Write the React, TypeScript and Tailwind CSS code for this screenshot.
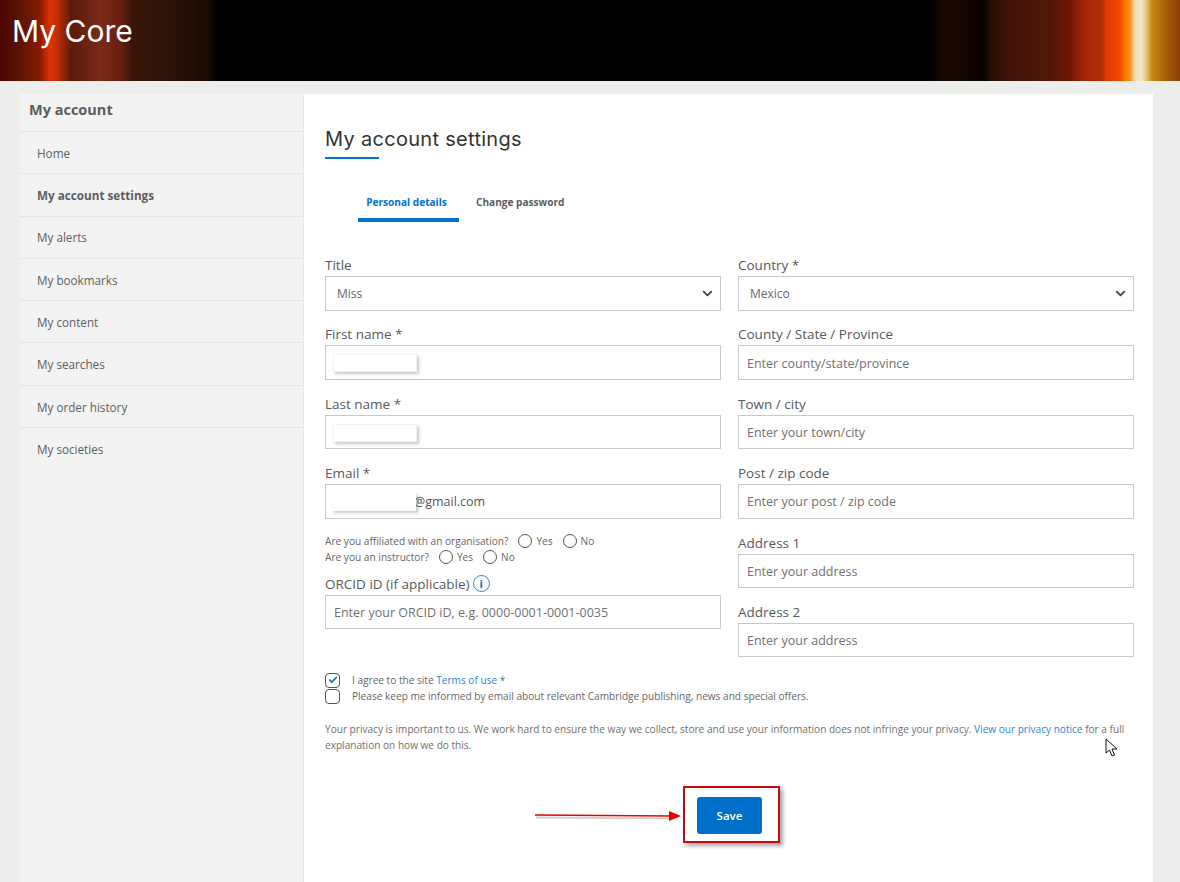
import { ChevronDown, Check } from 'lucide-react'

const navItems = ['Home', 'My account settings', 'My alerts', 'My bookmarks', 'My content', 'My searches', 'My order history', 'My societies']

function Label({ text }: { text: string }) {
  return <label className="block h-[22px] text-[13.5px] leading-[22px] text-[#55595c]">{text}</label>
}

function SelectField({ label, value }: { label: string; value: string }) {
  return (
    <div>
      <Label text={label} />
      <div className="flex h-[34.5px] items-center justify-between border border-[#c8c8c8] bg-white pl-[11px] pr-[5px] text-[12px] text-[#666]">
        <span className="pt-[2px]">{value}</span>
        <ChevronDown size={15} strokeWidth={3} className="text-[#444]" />
      </div>
    </div>
  )
}

function TextField({ label, placeholder, redact }: { label: string; placeholder?: string; redact?: boolean }) {
  return (
    <div>
      <Label text={label} />
      <div className="relative">
        <input
          placeholder={placeholder}
          readOnly
          className="block h-[34.5px] w-full border border-[#c8c8c8] bg-white px-2 pt-[1px] text-[12.5px] text-[#555] outline-none placeholder:text-[#707070]"
        />
        {redact && <Redaction />}
      </div>
    </div>
  )
}

function Redaction() {
  return <div className="absolute left-2 top-[9px] h-[18px] w-[84px] border border-[#f2f2f2] bg-white shadow-[2px_2px_3px_rgba(0,0,0,0.22)]" />
}

function Radio({ text }: { text: string }) {
  return (
    <span className="ml-[10px] inline-flex items-center">
      <span className="h-[14px] w-[14px] rounded-full border border-[#555] bg-white" />
      <span className="ml-[4px]">{text}</span>
    </span>
  )
}

export default function App() {
  return (
    <div className="relative h-[882px] overflow-hidden bg-[#ededeb] font-['Open_Sans',sans-serif]">
      {/* Banner */}
      <header className="flex h-[81px] items-center bg-[linear-gradient(90deg,#4a0500_0px,#5a1505_20px,#8a1a03_40px,#e03000_50px,#c83005_56px,#5a1a0a_72px,#7a2a18_100px,#6a2010_120px,#3a1508_132px,#2a1208_170px,#1a0a03_208px,#000_216px,#000_930px,#1a0800_945px,#0a0300_985px,#2a1005_992px,#401508_1010px,#501808_1050px,#701505_1070px,#a82508_1085px,#b03008_1102px,#e03a05_1106px,#f04a02_1120px,#ff7a05_1126px,#f09020_1130px,#f0dcb0_1135px,#f5e8d0_1141px,#e8c880_1146px,#c88a10_1152px,#a86008_1165px,#8a4008_1180px)] pb-[18px] pl-[12px]">
        <h1 className="font-['Inter',sans-serif] text-[30px] font-normal text-white">My Core</h1>
      </header>

      <div className="ml-[20px] mt-[13px] flex w-[1133px]">
        {/* Sidebar */}
        <aside className="h-[800px] w-[284px] border-r border-[#e6e6e6] bg-[#f3f3f3]">
          <div className="flex h-[38px] items-center border-b border-[#e6e6e6] pb-[6px] pl-[9px] text-[14.5px] font-bold text-[#5a5d60]">My account</div>
          <ul>
            {navItems.map((item) => (
              <li
                key={item}
                className={`flex h-[42.3px] items-center border-b border-[#e6e6e6] pl-[17px] pt-[2px] text-[11.7px] text-[#5c5f62] last:border-b-0 ${
                  item === 'My account settings' ? 'font-bold' : ''
                }`}
              >
                {item}
              </li>
            ))}
          </ul>
        </aside>

        {/* Main card */}
        <main className="h-[800px] flex-1 bg-white pl-[21px] pr-[19px] pt-[32px]">
          <h2 className="font-['Inter',sans-serif] text-[20px] leading-[27px] font-normal tracking-[0.3px] text-[#333]">My account settings</h2>
          <div className="mt-[4px] h-[2px] w-[54px] bg-[#0072cf]" />

          <div className="ml-[33px] mt-[33px] flex text-[10.1px] font-bold">
            <div className="relative h-[30px] w-[101px] border-b-[4px] border-[#0072cf] pr-[4px] pt-[2px] text-center leading-[16px] text-[#0072cf]">
              Personal details
              <span className="absolute left-1/2 top-[26px] h-0 w-0 -translate-x-1/2 border-x-[4px] border-t-[4px] border-x-transparent border-t-[#0072cf]" />
            </div>
            <div className="ml-[17px] pt-[2px] leading-[16px] text-[#5a5d60]">Change password</div>
          </div>

          <div className="mt-[32px] grid grid-cols-[396px_396px] gap-x-[17px]">
            {/* Left column */}
            <div className="flex flex-col gap-[12.9px]">
              <SelectField label="Title" value="Miss" />
              <TextField label="First name *" redact />
              <TextField label="Last name *" redact />
              <div>
                <Label text="Email *" />
                <div className="relative flex h-[34.5px] items-center border border-[#c8c8c8] pl-[88px] pt-[1px] text-[12.5px] text-[#555]">
                  @gmail.com
                  <div className="absolute left-[6px] top-[8px] h-[18px] w-[84px] bg-white shadow-[2px_2px_3px_rgba(0,0,0,0.22)]" />
                </div>
              </div>
              <div className="mt-[1px] text-[10.15px] leading-[16px] text-[#666]">
                <div className="flex items-center">
                  Are you affiliated with an organisation?<Radio text="Yes" /><Radio text="No" />
                </div>
                <div className="flex items-center">
                  Are you an instructor?<Radio text="Yes" /><Radio text="No" />
                </div>
                <div className="mt-[8px] flex h-[22px] items-center text-[13.5px] text-[#55595c]">
                  ORCID iD (if applicable)
                  <span className="ml-[3px] flex h-[17px] w-[17px] items-center justify-center rounded-full border border-[#2a8ad8] text-[#0072cf]">
                    <span className="text-[11px] font-bold leading-none">i</span>
                  </span>
                </div>
                <input
                  placeholder="Enter your ORCID iD, e.g. 0000-0001-0001-0035"
                  readOnly
                  className="block h-[34.5px] w-full border border-[#c8c8c8] px-2 pt-[1px] text-[12.5px] outline-none placeholder:text-[#707070]"
                />
              </div>
            </div>

            {/* Right column */}
            <div className="flex flex-col gap-[12.9px]">
              <SelectField label="Country *" value="Mexico" />
              <TextField label="County / State / Province" placeholder="Enter county/state/province" />
              <TextField label="Town / city" placeholder="Enter your town/city" />
              <TextField label="Post / zip code" placeholder="Enter your post / zip code" />
              <TextField label="Address 1" placeholder="Enter your address" />
              <TextField label="Address 2" placeholder="Enter your address" />
            </div>
          </div>

          <div className="mt-[15px] text-[10.1px] text-[#666]">
            <div className="flex h-[16px] items-center">
              <span className="flex h-[15px] w-[15px] items-center justify-center rounded-[4px] border border-[#555]">
                <Check size={10} strokeWidth={4} className="text-[#0072cf]" />
              </span>
              <span className="ml-[12px]">
                I agree to the site <a className="text-[#1f87d8]">Terms of use</a> *
              </span>
            </div>
            <div className="flex h-[16px] items-center">
              <span className="h-[15px] w-[15px] rounded-[4px] border border-[#555]" />
              <span className="ml-[12px]">Please keep me informed by email about relevant Cambridge publishing, news and special offers.</span>
            </div>
          </div>

          <p className="mt-[17px] text-[10.08px] leading-[16px] text-[#707070]">
            Your privacy is important to us. We work hard to ensure the way we collect, store and use your information does not infringe your privacy.{' '}
            <a className="text-[#1f87d8]">View our privacy notice</a> for a full explanation on how we do this.
          </p>

          <div className="ml-[372px] mt-[44px]">
            <button className="h-[37px] w-[65px] rounded-[3px] bg-[#006fc9] text-[11.5px] font-semibold text-white">Save</button>
          </div>
        </main>
      </div>

      {/* Annotation drawn over the screenshot */}
      <div className="absolute left-[683px] top-[786px] h-[57px] w-[97px] border-[2px] border-[#c80a10] shadow-[3px_3px_4px_rgba(0,0,0,0.35)]" />
      <svg className="absolute left-[530px] top-[806px]" width="152" height="20" viewBox="0 0 152 20">
        <path d="M5 9.5 L140 10.5" stroke="#000" strokeOpacity="0.18" strokeWidth="2" transform="translate(1 2)" />
        <path d="M5 9 L140 10" stroke="#ee0000" strokeWidth="1.3" />
        <path d="M139 5 L151 10 L139 15 Z" fill="#ee0000" />
      </svg>

      {/* Mouse cursor */}
      <svg className="absolute left-[1105px] top-[738px]" width="14" height="20" viewBox="0 0 14 20">
        <path d="M1 1 V15 L4.5 12 L7 18 L9.5 17 L7 11 H12 Z" fill="#fff" stroke="#111" strokeWidth="1" strokeLinejoin="round" />
      </svg>
    </div>
  )
}
